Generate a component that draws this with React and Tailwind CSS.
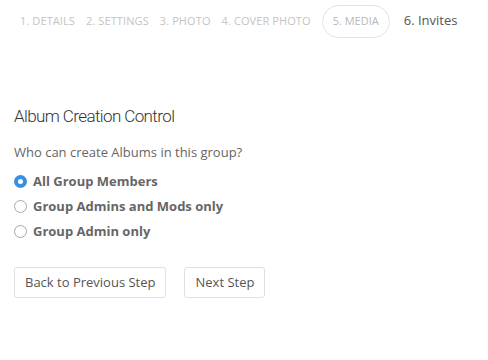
import React, { useState } from 'react';

const steps = ['1. Details', '2. Settings', '3. Photo', '4. Cover Photo'];

const options = [
  'All Group Members',
  'Group Admins and Mods only',
  'Group Admin only'
];

export default function App() {
  const [choice, setChoice] = useState(0);

  return (
    <div className="w-[488px] h-[360px] bg-white font-['Open_Sans',sans-serif]">
      <div className="flex items-center h-[44px] -mt-[1px] pl-[20px]">
        {steps.map(s => (
          <span key={s} className="mt-[1px] text-[11px] uppercase text-[#c4c4c4] mr-[11px] tracking-[0.1px]">
            {s}
          </span>
        ))}
        <span className="h-[33px] px-[10px] flex items-center rounded-full border border-[#e2e2e2] text-[11px] uppercase text-[#b8b8b8]">
          5. Media
        </span>
        <span className="ml-[14px] text-[13px] text-[#555]">6. Invites</span>
      </div>

      <div className="px-[14px] pt-[61px]">
        <h2 className="font-['Roboto',sans-serif] font-light text-[17px] text-[#333] tracking-[-0.6px] leading-[24px]">
          Album Creation Control
        </h2>
        <p className="mt-[15px] text-[13px] text-[#666] leading-[18px]">
          Who can create Albums in this group?
        </p>
        <div className="mt-[8px] flex flex-col">
          {options.map((o, i) => (
            <label
              key={o}
              className="flex items-center h-[25px] cursor-pointer"
              onClick={() => setChoice(i)}
            >
              {choice === i ? (
                <span className="w-[13px] h-[13px] rounded-full bg-[#3a8ee6] flex items-center justify-center">
                  <span className="w-[5px] h-[5px] rounded-full bg-white" />
                </span>
              ) : (
                <span className="w-[13px] h-[13px] rounded-full border border-[#a8a8a8] bg-white" />
              )}
              <span className="ml-[6px] text-[13px] font-bold text-[#666]">{o}</span>
            </label>
          ))}
        </div>
        <div className="mt-[23px] flex gap-[18px]">
          <button className="h-[31px] px-[10px] rounded-[3px] border border-[#e0e0e0] text-[13px] text-[#555]">
            Back to Previous Step
          </button>
          <button className="h-[31px] px-[10px] rounded-[3px] border border-[#e0e0e0] text-[13px] text-[#555]">
            Next Step
          </button>
        </div>
      </div>
    </div>
  );
}
